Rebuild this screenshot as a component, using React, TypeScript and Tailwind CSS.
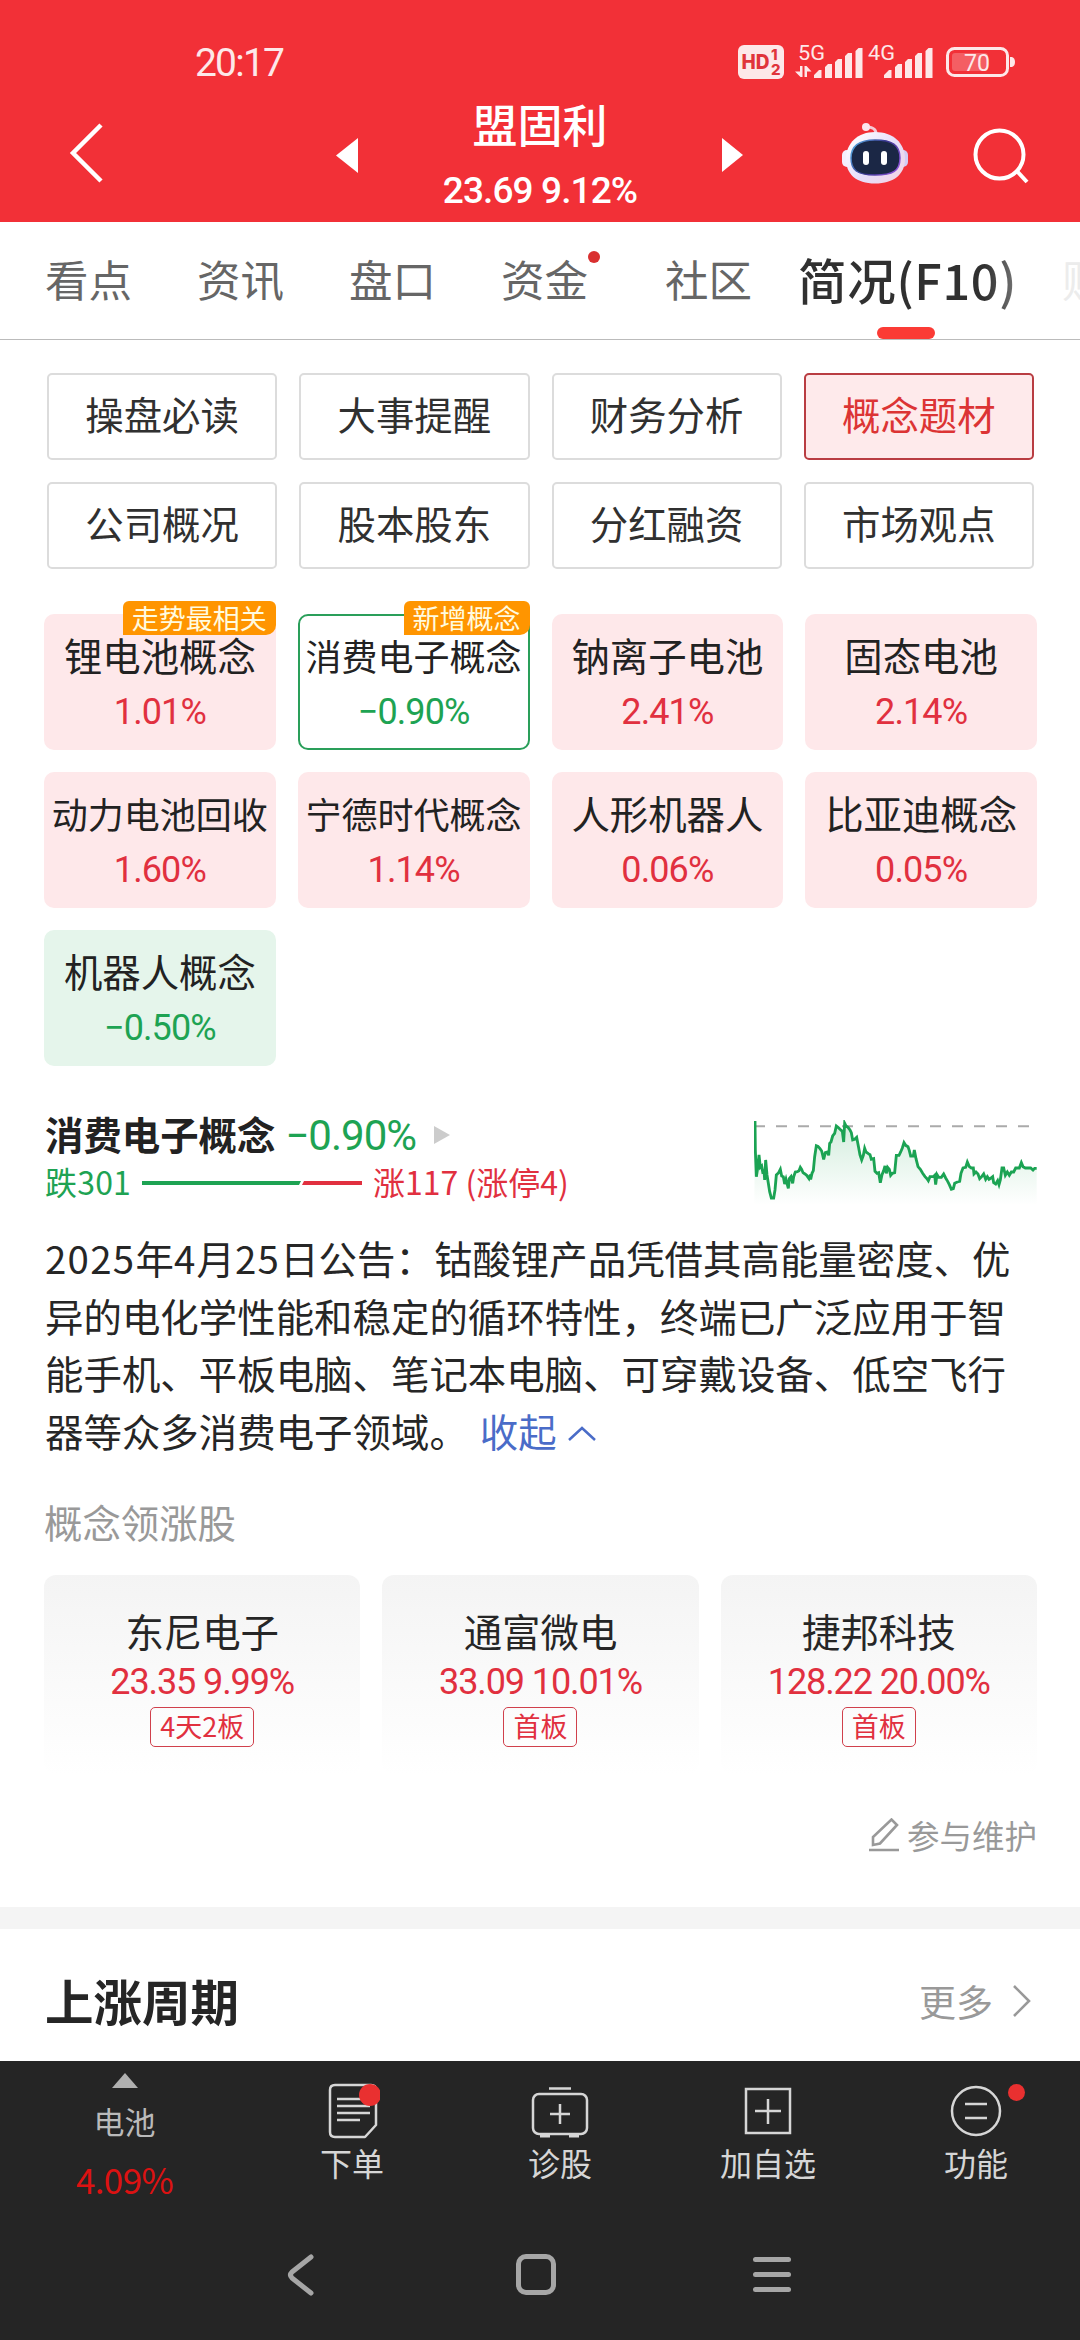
import React from 'react';

type Trend = 'up' | 'down';

interface Concept {
    name: string;
    change: string;
    trend: Trend;
    badge?: string;
    selected?: boolean;
}

const categories = ['操盘必读', '大事提醒', '财务分析', '概念题材', '公司概况', '股本股东', '分红融资', '市场观点'];

const concepts: Concept[] = [
    { name: '锂电池概念', change: '1.01%', trend: 'up', badge: '走势最相关' },
    { name: '消费电子概念', change: '−0.90%', trend: 'down', badge: '新增概念', selected: true },
    { name: '钠离子电池', change: '2.41%', trend: 'up' },
    { name: '固态电池', change: '2.14%', trend: 'up' },
    { name: '动力电池回收', change: '1.60%', trend: 'up' },
    { name: '宁德时代概念', change: '1.14%', trend: 'up' },
    { name: '人形机器人', change: '0.06%', trend: 'up' },
    { name: '比亚迪概念', change: '0.05%', trend: 'up' },
    { name: '机器人概念', change: '−0.50%', trend: 'down' },
];

const leaders = [
    { name: '东尼电子', quote: '23.35 9.99%', tag: '4天2板' },
    { name: '通富微电', quote: '33.09 10.01%', tag: '首板' },
    { name: '捷邦科技', quote: '128.22 20.00%', tag: '首板' },
];

const trendLine =
    '165,123 166,210 169,290 173,265 177,225 181,262 185,258 188,275 192,272 194,300 197,240 201,285 205,310 209,335 214,354 221,354 225,330 229,285 236,278 241,268 245,288 250,290 254,312 258,298 262,314 265,325 268,296 273,290 278,310 281,290 286,276 292,275 297,272 301,262 305,268 309,278 315,282 320,286 327,296 331,284 332,298 336,280 340,272 344,230 349,197 354,199 360,206 365,213 371,238 376,218 382,216 386,226 389,190 393,186 398,168 404,160 409,138 414,142 420,148 427,154 431,186 434,130 438,138 444,142 450,150 454,158 458,180 464,178 470,172 475,198 480,225 485,240 490,226 494,205 498,216 505,221 510,224 514,238 521,236 525,274 531,280 536,278 541,308 546,284 551,272 555,258 559,280 563,262 568,268 572,286 577,280 584,278 589,226 597,226 602,216 607,204 612,188 617,196 624,200 628,212 632,228 640,228 643,210 648,236 654,260 661,268 668,280 675,290 681,296 685,302 690,290 700,290 704,286 707,314 711,284 716,292 724,292 731,282 737,294 743,304 748,314 754,328 760,326 764,310 772,306 779,304 783,280 789,264 797,262 802,246 808,260 814,264 820,264 822,282 828,276 834,282 839,296 845,290 851,282 857,298 862,290 867,298 873,294 878,290 881,308 887,312 893,302 897,314 901,300 906,264 911,264 916,286 922,276 928,286 934,276 941,276 947,264 958,264 964,248 969,260 976,264 992,264 999,270 1004,265 1010,265';

const StatusIcons: React.FC = () => (
    <svg className="overflow-visible" width="280" height="36" viewBox="738 44 280 36" fill="#fde8e9">
        <rect x="738" y="45" width="46" height="34" rx="6" />
        <text x="741.5" y="69" fontSize="20" fontWeight="800" fill="#e0343b" fontFamily="Inter, sans-serif" textLength="28" lengthAdjust="spacingAndGlyphs">HD</text>
        <text x="771" y="60" fontSize="15" fontWeight="800" fill="#e0343b" fontFamily="Inter, sans-serif">1</text>
        <text x="771" y="75" fontSize="15" fontWeight="800" fill="#e0343b" fontFamily="Inter, sans-serif">2</text>
        <text x="798" y="60" fontSize="20" fontFamily="Roboto, sans-serif" textLength="27" lengthAdjust="spacingAndGlyphs">5G</text>
        <path d="M800 66h2.500v11h-2l-5.500-5.500h5zM804.500 77V66h2l5 5.500h-4.500V77z" />
        <path d="M814 78v-3l5-5h2.500v8zM825 78V67l3-3h4v14zM835 78V62l3-3h4v19zM845 78V56l3-3h4v25zM855.500 78V51l3-3h4v30z" />
        <text x="868" y="60" fontSize="20" fontFamily="Roboto, sans-serif" textLength="27" lengthAdjust="spacingAndGlyphs">4G</text>
        <path d="M884 78v-3l5-5h2.500v8zM895 78V67l3-3h4v14zM905 78V62l3-3h4v19zM915 78V56l3-3h4v25zM925.500 78V51l3-3h4v30z" />
        <rect x="947.500" y="48.500" width="60" height="27" rx="7" fill="none" stroke="#fde8e9" strokeWidth="3" />
        <rect x="952" y="53" width="36" height="18" rx="3" fillOpacity=".25" />
        <path d="M1010 57h2q3 1 3 5t-3 5h-2z" />
        <text x="964" y="71" fontSize="24" fontFamily="Roboto, sans-serif" textLength="26" lengthAdjust="spacingAndGlyphs">70</text>
    </svg>
);

const RobotIcon: React.FC = () => (
    <svg width="67" height="64" viewBox="842 121 67 64" fill="none">
        <defs>
            <linearGradient id="shell" x1="850" y1="135" x2="900" y2="183" gradientUnits="userSpaceOnUse">
                <stop stopColor="#ffffff" />
                <stop offset=".55" stopColor="#e6ddfa" />
                <stop offset="1" stopColor="#f3d3e4" />
            </linearGradient>
            <linearGradient id="visor" x1="850" y1="140" x2="902" y2="174" gradientUnits="userSpaceOnUse">
                <stop stopColor="#58b7e8" />
                <stop offset=".5" stopColor="#3a3590" />
                <stop offset="1" stopColor="#a05be8" />
            </linearGradient>
        </defs>
        <path d="M866 127c7 0 10 2 10 7" stroke="#f5c9d4" strokeWidth="3" />
        <circle cx="866" cy="127" r="4" fill="#fbe6ee" />
        <rect x="842" y="150" width="12" height="17" rx="5" fill="#f4eefc" />
        <rect x="896" y="150" width="12" height="17" rx="5" fill="#d3ccf5" />
        <path d="M875 132c18 0 30 11 30 27 0 15-11 24.500-30 24.500s-29-9.500-29-24.500c0-16 12-27 29-27z" fill="url(#shell)" />
        <path d="M875 140c17 0 25 5 25 18s-7 17-25 17-24-5-24-17 8-18 24-18z" fill="#1b2745" stroke="url(#visor)" strokeWidth="1.500" />
        <rect x="863" y="151" width="6" height="14" rx="3" fill="#fff" />
        <rect x="881" y="151" width="6" height="14" rx="3" fill="#fff" />
    </svg>
);

const Header: React.FC = () => (
    <header className="h-[222px] shrink-0 bg-[#f23037] text-white">
        <div className="flex h-[84px] items-center pl-[195px] pt-10">
            <span className="w-[543px] pt-0.5 font-[Roboto,sans-serif] text-[39px] leading-none tracking-[-1.8px] text-[#fde8e9]">20:17</span>
            <StatusIcons />
        </div>
        <div className="flex h-[138px] items-center">
            <svg className="ml-[69px]" width="35" height="60" viewBox="0 0 35 60" fill="none" stroke="#fff" strokeWidth="4.5">
                <path d="M32 2 4 30l28 28" />
            </svg>
            <svg className="ml-[232px] mt-1" width="22" height="35" viewBox="0 0 22 35" fill="#fff">
                <path d="M22 0v35L0 17.500z" />
            </svg>
            <div className="ml-[42px] h-full w-[280px] pt-1.5 text-center">
                <h1 className="h-[69px] text-[45px] font-medium leading-[68px]">盟固利</h1>
                <p className="h-16 whitespace-nowrap font-[Roboto,sans-serif] text-[37px] font-medium leading-[64px] tracking-[-0.9px]">23.69 9.12%</p>
            </div>
            <svg className="ml-[42px] mt-1" width="21" height="34" viewBox="0 0 21 34" fill="#fff">
                <path d="M0 0v34l21-17z" />
            </svg>
            <div className="ml-[99px]">
                <RobotIcon />
            </div>
            <svg className="ml-[64px] mt-1" width="57" height="57" viewBox="0 0 57 57" fill="none" stroke="#fff" strokeWidth="4">
                <circle cx="26.500" cy="27.500" r="24" />
                <path d="m43 43 11 12" />
            </svg>
        </div>
    </header>
);

const Tabs: React.FC = () => (
    <nav className="flex h-[118px] shrink-0 items-center overflow-hidden whitespace-nowrap border-b border-[#bbb] pl-[45px] text-[43.5px] text-[#666]">
        <span className="w-[152px] shrink-0 pb-[3px]">看点</span>
        <span className="w-[152px] shrink-0 pb-[3px]">资讯</span>
        <span className="w-[152px] shrink-0 pb-[3px]">盘口</span>
        <span className="relative w-[164px] shrink-0 pb-[3px]">
            资金
            <i className="absolute left-[87px] top-[5px] size-3 rounded-full bg-[#d93030]" />
        </span>
        <span className="w-[133px] shrink-0 pb-[3px]">社区</span>
        <span className="relative flex h-full w-[264px] shrink-0 items-center pb-[3px] text-[48.5px] font-medium text-[#303030]">
            <span className="bg-gradient-to-r from-[#303030] from-85% to-[#777] bg-clip-text tracking-[0.7px] text-transparent">简况(F10)</span>
            <i className="absolute bottom-0 left-[79px] h-3 w-[58px] rounded-full bg-[#fb3b35]" />
        </span>
        <span className="shrink-0 pb-[3px] text-[#ececec]">财</span>
    </nav>
);

const ConceptTile: React.FC<{ concept: Concept }> = ({ concept }) => {
    const up = concept.trend === 'up';
    const surface = concept.selected ? 'border-2 border-[#2a9f5a] bg-white' : up ? 'bg-[#fee8ea]' : 'bg-[#e5f5eb]';

    return (
        <div className={`relative flex h-[136px] flex-col items-center rounded-[10px] whitespace-nowrap ${surface}`}>
            <span
                className={`flex h-[79px] items-center pb-0.5 text-[#222] ${concept.name.length > 5 ? 'text-[36px]' : 'text-[38.4px]'} ${concept.selected ? '' : 'mt-0.5'}`}
            >
                {concept.name}
            </span>
            <span className={`font-[Roboto,sans-serif] text-[36px] leading-[35px] tracking-[-0.9px] ${up ? 'text-[#e1303f]' : 'text-[#1ea353]'}`}>
                {concept.change}
            </span>
            {concept.badge && (
                <span
                    className={`absolute flex h-[34px] items-center rounded-t-md rounded-br-[10px] bg-[#ff9500] px-[9px] pb-0.5 text-[27px] leading-none text-[#fffbe0] ${concept.selected ? '-right-0.5 -top-[15px]' : 'right-0 -top-[13px]'}`}
                >
                    {concept.badge}
                </span>
            )}
        </div>
    );
};

const ConceptDetail: React.FC = () => (
    <section className="pl-[45px] pr-[42px]">
        <div className="flex justify-between pt-[39px]">
            <div>
                <div className="flex h-[56px] items-center">
                    <h2 className="text-[38.4px] font-bold leading-[56px] text-[#222]">消费电子概念</h2>
                    <span className="ml-[10px] mt-[5px] font-[Roboto,sans-serif] text-[42px] leading-[56px] tracking-[-1px] text-[#1ea353]">−0.90%</span>
                    <svg className="ml-[18px] mt-1" width="16" height="18" viewBox="0 0 16 18" fill="#ccc">
                        <path d="M0 0v18l16-9z" />
                    </svg>
                </div>
                <div className="flex h-[40px] items-center whitespace-nowrap text-[32px] leading-10">
                    <span className="w-[97px] tracking-[0.2px] text-[#1ea353]">跌301</span>
                    <svg className="mt-1" width="220" height="4" viewBox="0 0 220 4">
                        <path d="M0 0h159l-2 4H0z" fill="#1ea353" />
                        <path d="M162 0h58v4h-60z" fill="#e1303f" />
                    </svg>
                    <span className="ml-[11px] text-[#e1303f]">涨117 (涨停4)</span>
                </div>
            </div>
            <svg className="mt-[15px]" width="284" height="88" viewBox="162 120 852 264" fill="none">
                <defs>
                    <linearGradient id="area" x1="0" y1="0" x2="0" y2="1">
                        <stop stopColor="#1ea353" stopOpacity=".2" />
                        <stop offset="1" stopColor="#1ea353" stopOpacity="0" />
                    </linearGradient>
                </defs>
                <path d="M162 139h828" stroke="#aaa" strokeWidth="6" strokeDasharray="33 33" />
                <polygon points={`163,375 ${trendLine} 1010,375`} fill="url(#area)" />
                <polyline points={trendLine} stroke="#1ba353" strokeWidth="8.5" />
            </svg>
        </div>
        <p className="mt-[21px] w-[985px] text-[38.4px] leading-[57.6px] tracking-[0.05px] text-[#262626]">
            <span className="tracking-[1.3px]">2025</span>年<span className="tracking-[1.3px]">4</span>月<span className="tracking-[1.3px]">25</span>
            日公告：钴酸锂产品凭借其高能量密度、优异的电化学性能和稳定的循环特性，终端已广泛应用于智能手机、平板电脑、笔记本电脑、可穿戴设备、低空飞行器等众多消费电子领域。
            <span className="ml-[12px] text-[#4a6cc8]">收起</span>
            <svg className="mb-1.5 ml-[11px] inline-block" width="28" height="15" viewBox="0 0 28 15" fill="none" stroke="#4a6cc8" strokeWidth="2.5">
                <path d="M1 14 14 2l13 12" />
            </svg>
        </p>
    </section>
);

const Leaders: React.FC = () => (
    <section className="pl-11 pr-[43px]">
        <h3 className="mt-[36px] h-[52px] text-[38.4px] leading-[52px] text-[#999]">概念领涨股</h3>
        <div className="mt-[28px] grid grid-cols-3 gap-[22px]">
            {leaders.map((stock) => (
                <div key={stock.name} className="flex h-[200px] flex-col items-center rounded-[12px] bg-gradient-to-b from-[#f4f4f4] to-white pt-[30px]">
                    <span className="text-[38.4px] leading-[50px] text-[#262626]">{stock.name}</span>
                    <span className="mt-[3px] whitespace-nowrap font-[Roboto,sans-serif] text-[36px] leading-[49px] tracking-[-1.1px] text-[#e1303f]">{stock.quote}</span>
                    <span className="h-10 rounded-[5px] border-[1.5px] border-[#d0404c] px-[9px] text-[27px] leading-9 text-[#e1303f]">{stock.tag}</span>
                </div>
            ))}
        </div>
        <div className="mt-[32px] flex h-[56px] items-center justify-end text-[32.5px] text-[#999]">
            <svg className="mr-[7px]" width="31" height="34" viewBox="0 0 31 34" fill="none" stroke="#999" strokeWidth="2.6">
                <path d="M0 32h30M4 27v-8L22.500 1.500l5.500 5.500L11 25.500z" />
            </svg>
            参与维护
        </div>
    </section>
);

const barItem = 'flex flex-col items-center text-[32px] leading-[46px] text-[#d6d6d6]';

const BottomBar: React.FC = () => (
    <footer className="h-[279px] shrink-0 bg-[#252525]">
        <div className="flex h-[148px] whitespace-nowrap">
            <div className="flex w-[249px] flex-col items-center pt-3 text-[#bababa]">
                <svg width="26" height="15" viewBox="0 0 26 15" fill="#b0b0b0">
                    <path d="M13 0l13 15H0z" />
                </svg>
                <span className="mt-[11px] text-[31px] leading-[44px]">电池</span>
                <span className="mt-[14px] text-[35px] leading-[44px] tracking-[-0.6px] text-[#dc1212]">4.09%</span>
            </div>
            <div className={`${barItem} ml-[53px] w-[100px] pt-[22px]`}>
                <svg className="ml-1" width="52" height="56" viewBox="0 0 52 56" fill="none" stroke="#d6d6d6" strokeWidth="2.5">
                    <path d="M37 54H7q-5 0-5-5V7q0-5 5-5h36q5 0 5 5v35z" strokeLinejoin="round" />
                    <path d="M9 16h28M9 23h33M9 30h33M9 37h23" />
                    <circle cx="42" cy="12" r="11" fill="#e93030" stroke="none" />
                </svg>
                <span>下单</span>
            </div>
            <div className={`${barItem} ml-[108px] w-[100px] pt-[22px]`}>
                <svg width="58" height="56" viewBox="0 0 58 56" fill="none" stroke="#d6d6d6" strokeWidth="2.5">
                    <path d="M18 5.500h22M29 21v20M19 31h20" />
                    <rect x="2" y="11" width="54" height="40" rx="6" />
                    <path d="M9 53h10M38 53h10" strokeWidth="3" />
                </svg>
                <span>诊股</span>
            </div>
            <div className={`${barItem} ml-[108px] w-[100px] pt-[22px]`}>
                <svg width="50" height="56" viewBox="0 0 50 56" fill="none" stroke="#d6d6d6" strokeWidth="2.500">
                    <rect x="3" y="6" width="44" height="44" />
                    <path d="M25 16v25M12 28h26" />
                </svg>
                <span>加自选</span>
            </div>
            <div className={`${barItem} relative ml-[108px] w-[100px] pt-[22px]`}>
                <svg width="52" height="56" viewBox="0 0 52 56" fill="none" stroke="#d6d6d6" strokeWidth="2.500">
                    <circle cx="26" cy="28" r="24" />
                    <path d="M15 21h22M15 35h22" />
                </svg>
                <span>功能</span>
                <i className="absolute right-[1px] top-[23px] size-[17px] rounded-full bg-[#e93030]" />
            </div>
        </div>
        <div className="flex h-[131px] items-center pl-[287px]">
            <svg width="28" height="42" viewBox="0 0 28 42" fill="none" stroke="#a6a6a6" strokeWidth="5" strokeLinecap="round" strokeLinejoin="round">
                <path d="M24 3 5 18q-3 3 0 6l19 15" />
            </svg>
            <span className="ml-[201px] h-[41px] w-10 rounded-[10px] border-[5px] border-[#a6a6a6]" />
            <span className="ml-[197px] flex w-[38px] flex-col gap-[10px]">
                <i className="h-[5px] rounded-full bg-[#a6a6a6]" />
                <i className="h-[5px] rounded-full bg-[#a6a6a6]" />
                <i className="h-[5px] rounded-full bg-[#a6a6a6]" />
            </span>
        </div>
    </footer>
);

export default function App() {
    return (
        <div className="flex h-[2340px] w-[1080px] flex-col overflow-hidden bg-white font-['Noto_Sans_CJK_SC',sans-serif]">
            <Header />
            <Tabs />
            <main className="min-h-0 flex-1 overflow-hidden">
                <div className="grid grid-cols-4 gap-[22px] pl-[47px] pr-[46px] pt-[33px]">
                    {categories.map((label) => (
                        <button
                            key={label}
                            className={`flex h-[87px] items-center justify-center rounded-[5px] border-2 pb-[6px] text-[38.4px] ${
                                label === '概念题材' ? 'border-[#b93d42] bg-[#feeaeb] text-[#dc3434]' : 'border-[#dcdcdc] text-[#303030]'
                            }`}
                        >
                            {label}
                        </button>
                    ))}
                </div>
                <div className="grid grid-cols-4 gap-[22px] pl-11 pr-[43px] pt-[45px]">
                    {concepts.map((concept) => (
                        <ConceptTile key={concept.name} concept={concept} />
                    ))}
                </div>
                <ConceptDetail />
                <Leaders />
                <div className="mt-[44px] h-[22px] bg-[#f4f4f4]" />
                <div className="flex h-[132px] items-center justify-between pl-[45px] pr-[49px] pt-[9px]">
                    <h2 className="text-[48.5px] font-bold text-[#262626]">上涨周期</h2>
                    <span className="flex items-center pt-[3px] text-[37px] text-[#999]">
                        更多
                        <svg className="ml-[19px]" width="19" height="34" viewBox="0 0 19 34" fill="none" stroke="#999" strokeWidth="2.6">
                            <path d="m2 2 15 15L2 32" />
                        </svg>
                    </span>
                </div>
            </main>
            <BottomBar />
        </div>
    );
}
